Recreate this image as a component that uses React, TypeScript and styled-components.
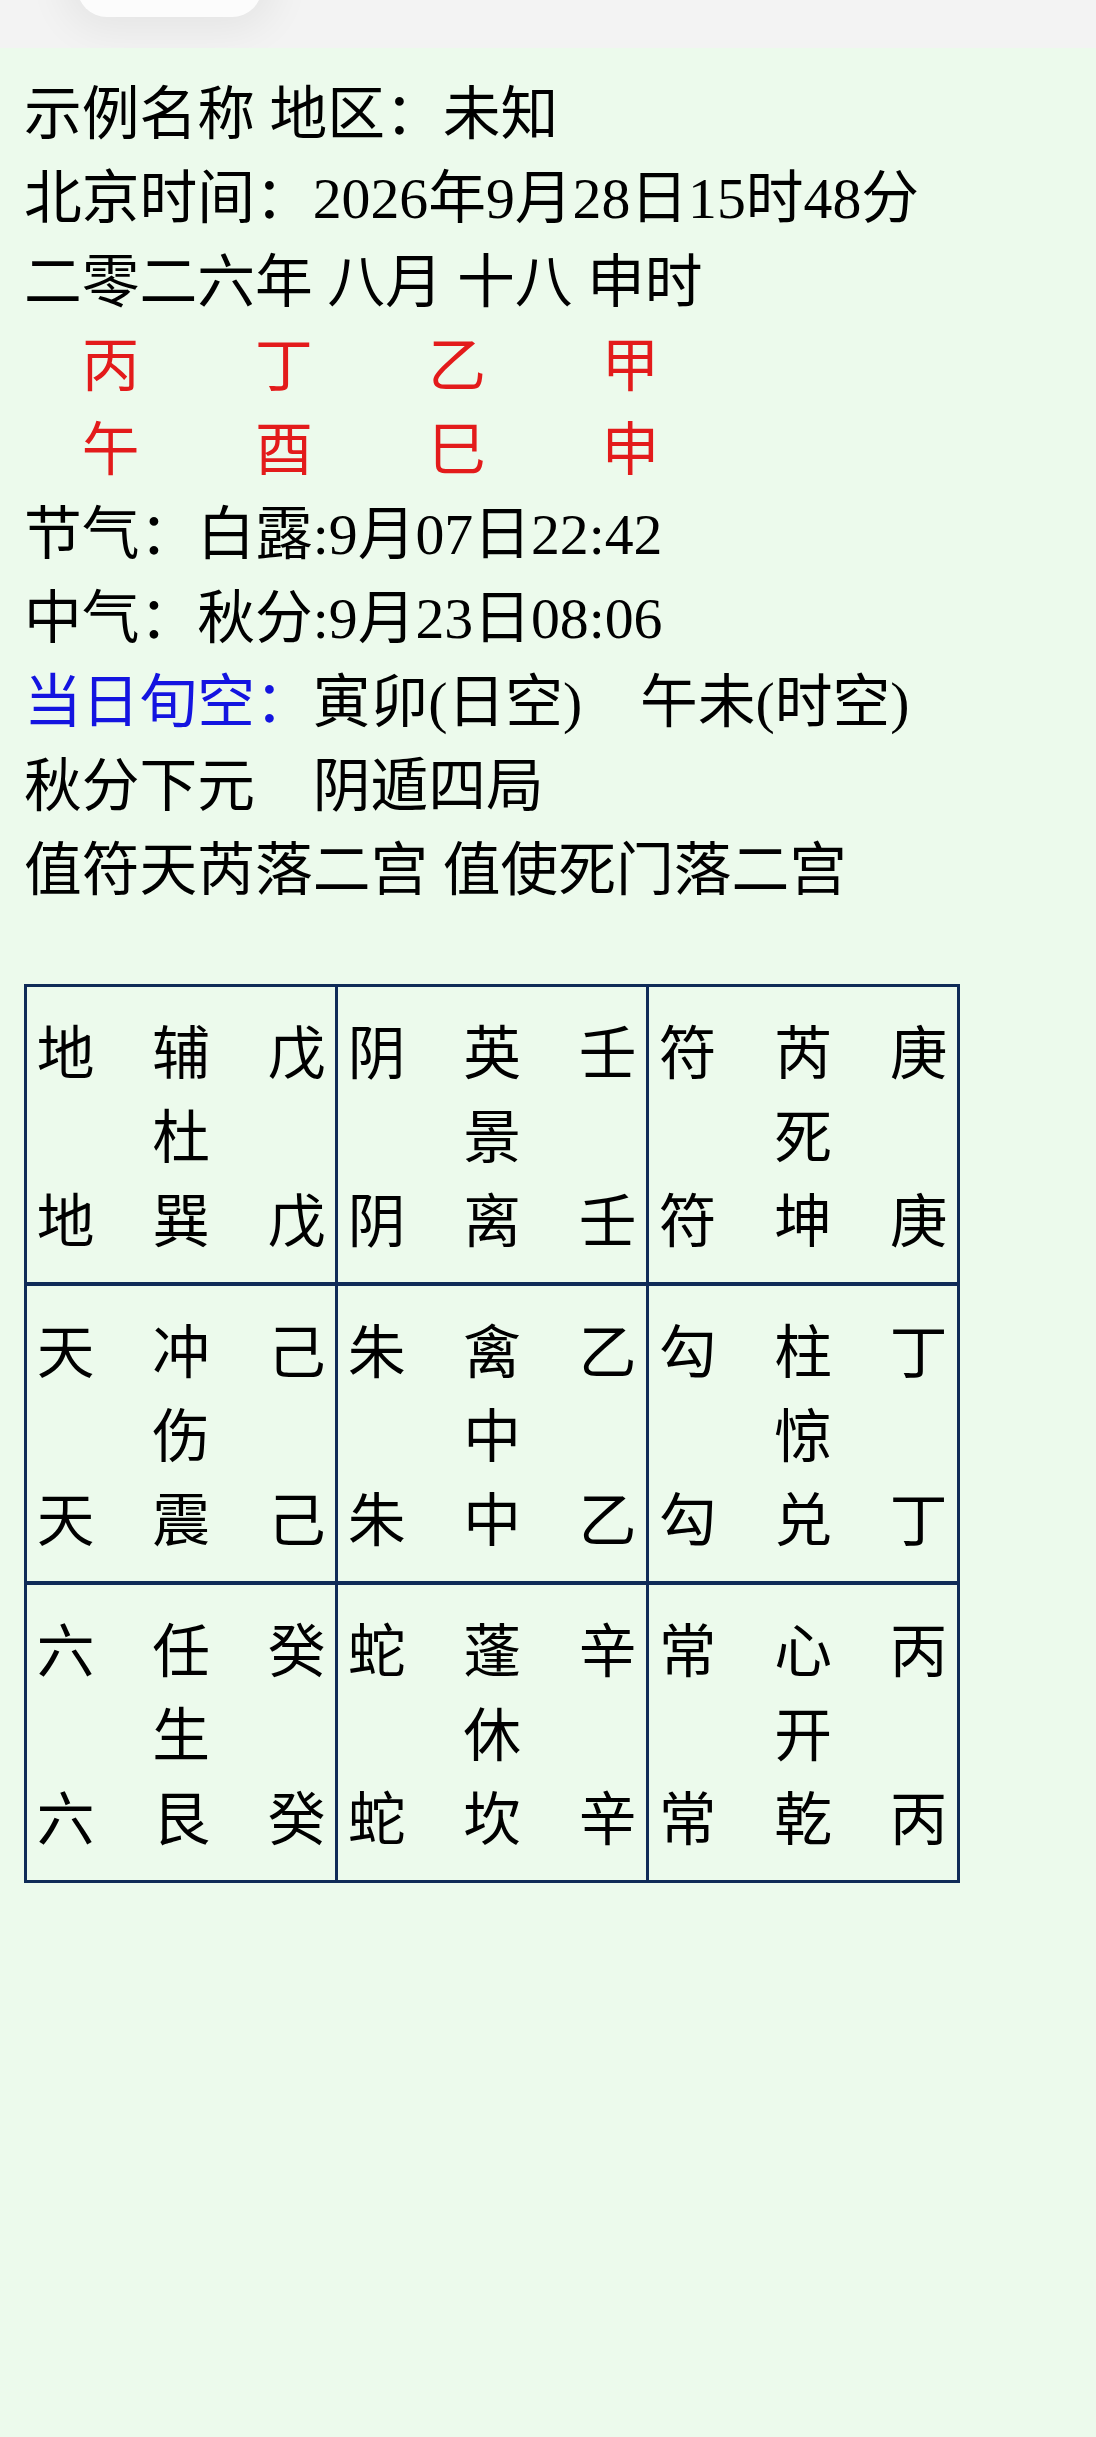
import React from 'react';
import styled, { createGlobalStyle } from 'styled-components';

const GlobalStyle = createGlobalStyle`
  html, body {
    margin: 0;
    padding: 0;
    background: #ecfaec;
  }
  body {
    font-family: "Liberation Serif", "Noto Sans CJK SC", serif;
  }
`;

const Page = styled.div`
  min-height: 2437px;
  background: #ecfaec;
  display: flex;
  flex-direction: column;
`;

const TopBar = styled.div`
  height: 48px;
  background: #f3f3f3;
  display: flex;
  align-items: flex-start;
  padding-left: 77px;
  overflow: hidden;
  flex-shrink: 0;
`;

const Handle = styled.div`
  width: 185px;
  height: 60px;
  margin-top: -43px;
  background: #fcfcfc;
  border-radius: 0 0 30px 30px;
  box-shadow: 0 0 40px 14px rgba(0, 0, 0, 0.06);
`;

const Content = styled.div`
  padding: 25px 24px 0 24px;
  font-size: 57.75px;
  line-height: 84px;
  color: #000;
`;

const Line = styled.div`
  white-space: pre;
`;

const GanZhiRow = styled.div`
  display: grid;
  grid-template-columns: repeat(4, 1em);
  column-gap: 2em;
  padding-left: 1em;
  color: #e31b1b;
`;

const Label = styled.span`
  color: #1414e0;
`;

const Board = styled.div`
  margin-top: 71px;
  width: 936px;
  box-sizing: border-box;
  display: grid;
  grid-template-columns: repeat(3, 1fr);
  grid-auto-rows: 295px;
  gap: 4px 3px;
  padding: 3px;
  background: #0f2b57;
`;

const Palace = styled.div`
  background: #ecfaec;
  display: grid;
  grid-template-columns: repeat(3, 1em);
  grid-template-rows: repeat(3, 84px);
  column-gap: 1em;
  justify-content: center;
  align-content: center;
  padding-top: 8px;
  box-sizing: border-box;
`;

const Glyph = styled.span<{ $col?: number }>`
  grid-column: ${(p) => p.$col ?? 'auto'};
`;

type PalaceData = {
  god: string;
  star: string;
  stem: string;
  door: string;
  gua: string;
};

const palaces: PalaceData[] = [
  { god: '地', star: '辅', stem: '戊', door: '杜', gua: '巽' },
  { god: '阴', star: '英', stem: '壬', door: '景', gua: '离' },
  { god: '符', star: '芮', stem: '庚', door: '死', gua: '坤' },
  { god: '天', star: '冲', stem: '己', door: '伤', gua: '震' },
  { god: '朱', star: '禽', stem: '乙', door: '中', gua: '中' },
  { god: '勾', star: '柱', stem: '丁', door: '惊', gua: '兑' },
  { god: '六', star: '任', stem: '癸', door: '生', gua: '艮' },
  { god: '蛇', star: '蓬', stem: '辛', door: '休', gua: '坎' },
  { god: '常', star: '心', stem: '丙', door: '开', gua: '乾' },
];

const stems = ['丙', '丁', '乙', '甲'];
const branches = ['午', '酉', '巳', '申'];

export default function App() {
  return (
    <Page>
      <GlobalStyle />
      <TopBar>
        <Handle />
      </TopBar>
      <Content>
        <Line>示例名称 地区：未知</Line>
        <Line>北京时间：2026年9月28日15时48分</Line>
        <Line>二零二六年 八月 十八 申时</Line>
        <GanZhiRow>
          {stems.map((s, i) => (
            <span key={i}>{s}</span>
          ))}
        </GanZhiRow>
        <GanZhiRow>
          {branches.map((s, i) => (
            <span key={i}>{s}</span>
          ))}
        </GanZhiRow>
        <Line>节气：白露:9月07日22:42</Line>
        <Line>中气：秋分:9月23日08:06</Line>
        <Line>
          <Label>当日旬空：</Label>寅卯(日空)　午未(时空)
        </Line>
        <Line>秋分下元　阴遁四局</Line>
        <Line>值符天芮落二宫 值使死门落二宫</Line>
        <Board>
          {palaces.map((p, i) => (
            <Palace key={i}>
              <Glyph>{p.god}</Glyph>
              <Glyph>{p.star}</Glyph>
              <Glyph>{p.stem}</Glyph>
              <Glyph $col={2}>{p.door}</Glyph>
              <Glyph $col={1}>{p.god}</Glyph>
              <Glyph>{p.gua}</Glyph>
              <Glyph>{p.stem}</Glyph>
            </Palace>
          ))}
        </Board>
      </Content>
    </Page>
  );
}
